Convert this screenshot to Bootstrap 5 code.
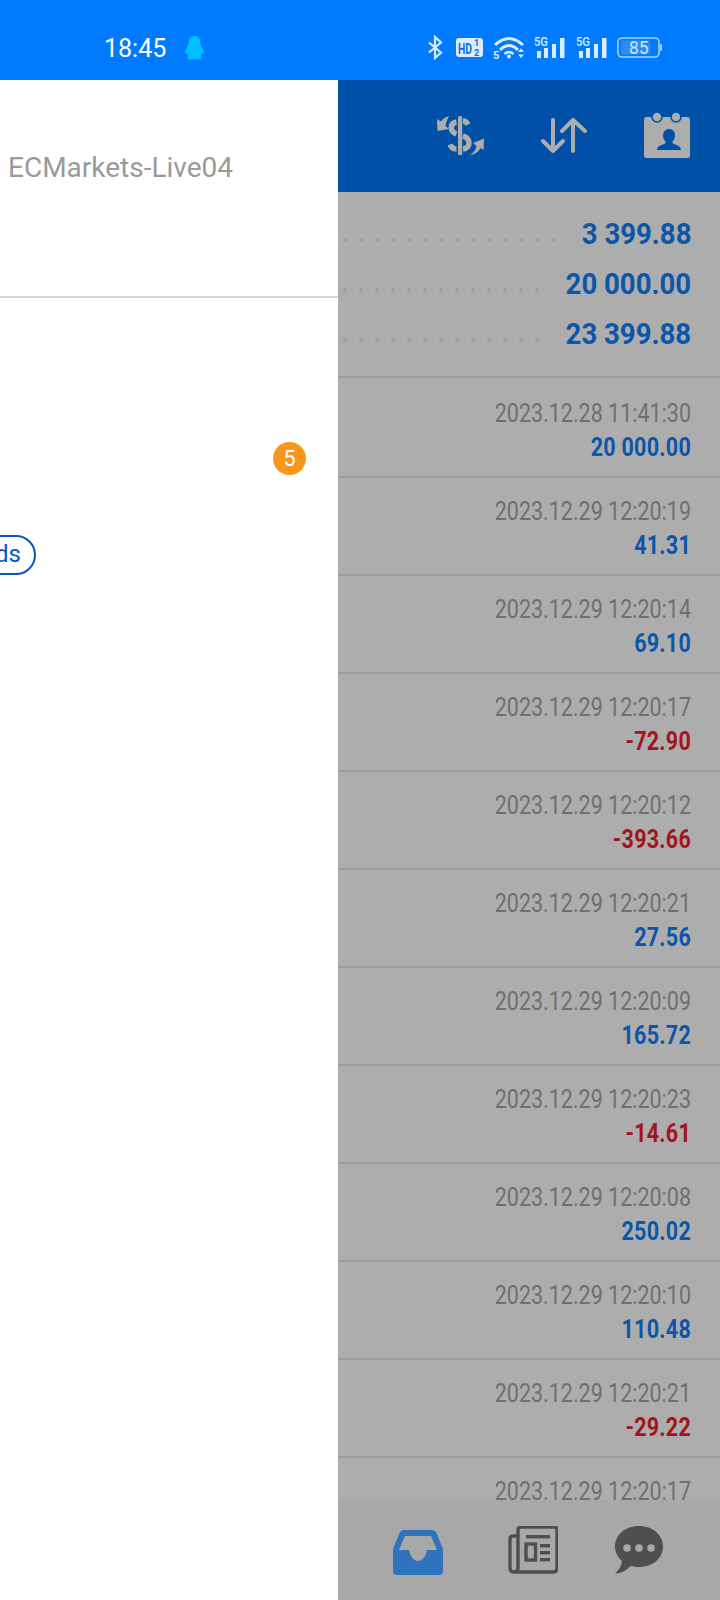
<!DOCTYPE html>
<html lang="en">
<head>
    <meta charset="UTF-8">
    <meta name="viewport" content="width=device-width, initial-scale=1.0">
    <title>Trade history</title>
    <link rel="stylesheet" href="https://cdn.jsdelivr.net/npm/bootstrap@5.3.0/dist/css/bootstrap.min.css">
    <style>
        body { width: 720px; height: 1600px; overflow: hidden; font-family: Roboto, "Liberation Sans", sans-serif; background: #fff; }
        svg { display: block; flex: none; }

        /* status bar */
        .status-strip { height: 80px; background: #007aff; padding: 36px 58px 0 104px; }
        .clock { color: #fff; font-size: 25px; line-height: 26px; width: 80px; }
        .status-icons { margin-top: -4px; }

        /* left drawer */
        .drawer { width: 338px; height: 1520px; flex: none; background: #fff; }
        .drawer-head { height: 218px; border-bottom: 2px solid #d6d6d6; padding: 73px 0 0 8px; }
        .server-name { color: #9a9a9a; font-size: 28px; line-height: 30px; white-space: nowrap; }
        .drawer-count { padding: 144px 32px 0 0; height: 0; }
        .count-dot { width: 33px; height: 33px; background: #f7981d; color: #fff; font-size: 22px; line-height: 1; }
        .funds-wrap { width: 36px; margin-top: 93px; }
        .funds-pill { flex: none; height: 40px; border: 2px solid #0a56c0; border-radius: 20px; color: #0a56c0; font-size: 24px; line-height: 34px; padding: 0 13px 0 14px; }

        /* right side, dimmed by the open drawer */
        .main-side { background: #adadad; height: 1520px; min-width: 0; }
        .top-tools { height: 112px; background: #0050a8; padding: 32px 30px 0 98px; }
        .tool-drop { margin-top: 6px; }
        .totals { height: 184px; padding: 17px 29px 0 0; }
        .total-line { height: 50px; }
        .leader { flex: 1 1 0; height: 4px; margin: 12px 26px 0 5px; background-image: radial-gradient(circle at 2px 2px, #a0a0a0 2px, transparent 2.2px); background-size: 16px 4px; background-repeat: repeat-x; }
        .total-val { color: #0b56ab; font-size: 29px; font-weight: 700; line-height: 30px; white-space: nowrap; display: block; transform: scaleX(.95); transform-origin: right center; margin-left: -7px; }

        .deal-list { flex: 1 1 0; min-height: 0; overflow: hidden; border-radius: 0; }
        .deal-list .list-group-item { flex: none; height: 98px; padding: 17px 29px 0 0; background: transparent; border: 0; border-top: 2px solid #9c9c9c; text-align: right; }
        .deal-list .list-group-item:first-child { height: 100px; padding-top: 19px; }
        .deal-date, .deal-amt { display: block; line-height: 34px; transform: scaleX(.86); transform-origin: right center; white-space: nowrap; font-size: 25px; }
        .deal-date { color: #6f6f6f; }
        .deal-amt { font-weight: 700; letter-spacing: .3px; }
        .amt-plus { color: #0b56ab; }
        .amt-minus { color: #a3141c; }

        .bottom-tabs { height: 100px; flex: none; background: #a8a8a8; padding: 26px 56px 0 55px; }
        .tab-news { margin-left: 8px; }
    </style>
</head>
<body>
    <!-- status bar -->
    <div class="status-strip d-flex align-items-start">
        <div class="clock">18:45</div>
        <svg width="21" height="24" viewBox="0 0 21 24"><path d="M10.500 0C6 0 4.500 3.500 4.500 7.500C4.500 9.500 1.500 13 1 16C.8 17.500 1.600 18 2.800 16.800C3.200 18 3.800 19 4.600 20C3 20.600 2.600 23 5 23.500H8C9 23.500 10 23 10.500 23C11 23 12 23.500 13 23.500H16C18.400 23 18 20.600 16.400 20C17.200 19 17.800 18 18.200 16.800C19.400 18 20.200 17.500 20 16C19.500 13 16.500 9.500 16.500 7.500C16.500 3.500 15 0 10.500 0Z" fill="#00c0ff"/></svg>
        <div class="status-icons ms-auto">
            <svg width="234" height="32" viewBox="0 -4 234 32">
                <!-- bluetooth -->
                <path d="M1 6.500L13 16.500L7 22V1L13 6.500L1 16.500" fill="none" stroke="#dcecff" stroke-width="2.200"/>
                <!-- HD 1/2 -->
                <rect x="28" y="2" width="27" height="19" rx="3" fill="#dcecff"/>
                <text x="30" y="17.500" font-family="Roboto, sans-serif" font-weight="700" font-size="15" fill="#0a6fe0" textLength="14" lengthAdjust="spacingAndGlyphs">HD</text>
                <text x="46" y="10" font-family="Roboto, sans-serif" font-weight="700" font-size="9" fill="#0a6fe0">1</text>
                <text x="46" y="19.500" font-family="Roboto, sans-serif" font-weight="700" font-size="9" fill="#0a6fe0">2</text>
                <!-- wifi -->
                <path d="M67 9Q81 -4 95 9M72 14Q81 5 90 14" fill="none" stroke="#dcecff" stroke-width="3"/>
                <path d="M76.500 18Q81 14 85.500 18" fill="none" stroke="#dcecff" stroke-width="2.600"/>
                <circle cx="81" cy="20.500" r="2" fill="#dcecff"/>
                <text x="65" y="23" font-family="Roboto, sans-serif" font-weight="700" font-size="11" fill="#dcecff">5</text>
                <path d="M90 16h6l-3 -3.500zM90 18.500h6l-3 3.500z" fill="#dcecff"/>
                <!-- signal 1 -->
                <text x="106" y="10" font-family="Roboto, sans-serif" font-weight="500" font-size="12.500" fill="#dcecff" textLength="14" lengthAdjust="spacingAndGlyphs">5G</text>
                <rect x="109" y="15" width="4" height="7" fill="#dcecff"/><rect x="116" y="12" width="4" height="10" fill="#dcecff"/><rect x="124" y="8" width="4" height="14" fill="#dcecff"/><rect x="132" y="2" width="4.500" height="20" fill="#dcecff"/>
                <!-- signal 2 -->
                <text x="148" y="10" font-family="Roboto, sans-serif" font-weight="500" font-size="12.500" fill="#dcecff" textLength="14" lengthAdjust="spacingAndGlyphs">5G</text>
                <rect x="151" y="15" width="4" height="7" fill="#dcecff"/><rect x="158" y="12" width="4" height="10" fill="#dcecff"/><rect x="166" y="8" width="4" height="14" fill="#dcecff"/><rect x="174" y="2" width="4.500" height="20" fill="#dcecff"/>
                <!-- battery -->
                <rect x="190" y="2" width="41" height="19" rx="4" fill="none" stroke="#a9d2ff" stroke-width="1.600"/>
                <rect x="193" y="4.500" width="29" height="14" rx="2" fill="#2b8cf5"/>
                <rect x="232" y="8" width="2" height="7" rx="1" fill="#a9d2ff"/>
                <text x="201" y="18" font-family="Roboto, sans-serif" font-size="17.500" fill="#cfe5ff">85</text>
            </svg>
        </div>
    </div>

    <div class="d-flex">
        <!-- drawer, slid most of the way out -->
        <div class="drawer overflow-hidden">
            <div class="drawer-head">
                <div class="server-name">ECMarkets-Live04</div>
            </div>
            <div class="drawer-count d-flex justify-content-end">
                <div class="count-dot rounded-circle d-flex align-items-center justify-content-center">5</div>
            </div>
            <div class="funds-wrap d-flex justify-content-end overflow-hidden">
                <div class="funds-pill">Funds</div>
            </div>
        </div>

        <div class="main-side flex-grow-1 d-flex flex-column">
            <div class="top-tools d-flex align-items-start justify-content-between">
                <!-- swap dollar -->
                <svg class="mt-1" width="48" height="40" viewBox="0 0 48 40" fill="#adadad">
                    <rect x="22" y="0" width="4.200" height="39" rx="1.500"/>
                    <g fill="none" stroke="#adadad" stroke-width="5.500">
                        <path d="M20.500 6C14 7 13 15 20.500 18"/>
                        <path d="M27 5C29.500 5 31 6.500 32 8.500"/>
                        <path d="M27 20C35 22 35 32 27 33"/>
                        <path d="M20.500 33C17 33 15 31 14 28.500"/>
                    </g>
                    <path d="M13 0C9 1 6.500 3 5 5.500L1 3L1.500 15L13 13L9.500 10C10 6 11.500 3 13 0Z"/>
                    <path d="M33.500 39C38 37 40 33 40.500 30L37 27L48 22.500L47.500 34L44.500 32C42.500 36 38 39 33.500 39Z"/>
                </svg>
                <!-- sort arrows -->
                <svg class="tool-drop" width="46" height="36" viewBox="0 0 46 36" fill="none" stroke="#adadad" stroke-width="4" stroke-linecap="round" stroke-linejoin="round">
                    <path d="M12 2V33M2 23L12 33L22 23"/>
                    <path d="M32 2V33M21 13L32 2L44 13"/>
                </svg>
                <!-- contact calendar -->
                <svg width="46" height="46" viewBox="0 0 46 46">
                    <rect x="0" y="5" width="46" height="41" rx="2.500" fill="#adadad"/>
                    <circle cx="13" cy="5" r="5" fill="#adadad" stroke="#0050a8" stroke-width="1.600"/>
                    <circle cx="32" cy="5" r="5" fill="#adadad" stroke="#0050a8" stroke-width="1.600"/>
                    <path d="M25 17C29 17 31 20 31 23.500C31 26 30 28 28.500 29.500V31C30 33 37 33 37 38H13C13 33 20 33 21.500 31V29.500C20 28 19 26 19 23.500C19 20 21 17 25 17Z" fill="#0050a8"/>
                </svg>
            </div>

            <div class="totals">
                <div class="total-line d-flex align-items-center"><span class="leader"></span><span class="total-val">3 399.88</span></div>
                <div class="total-line d-flex align-items-center"><span class="leader"></span><span class="total-val">20 000.00</span></div>
                <div class="total-line d-flex align-items-center"><span class="leader"></span><span class="total-val">23 399.88</span></div>
            </div>

            <ul id="dealList" class="deal-list list-group list-group-flush"></ul>

            <div class="bottom-tabs d-flex justify-content-between align-items-start">
                <!-- inbox -->
                <svg class="mt-1" width="50" height="45" viewBox="0 0 50 45">
                    <path d="M11 0H39C41 0 42.500 1 43.500 3L50 19V41C50 43.500 48.500 45 46 45H4C1.500 45 0 43.500 0 41V19L6.500 3C7.500 1 9 0 11 0Z" fill="#2f72bd"/>
                    <path d="M12 6H38L44 20H34C33 25 30 31 25 31C20 31 17 25 16 20H6Z" fill="#a8a8a8"/>
                </svg>
                <!-- news -->
                <svg class="tab-news" width="50" height="48" viewBox="0 0 50 48">
                    <path d="M9 10H5Q2 10 2 13V42Q2 46 6 46H46Q49 46 49 42V4Q49 1 46 1H13Q10 1 10 4V42Q10 46 6 46" fill="none" stroke="#4f4f4f" stroke-width="3.400"/>
                    <rect x="18" y="9" width="24" height="3.400" fill="#4f4f4f"/>
                    <rect x="18" y="18" width="9.500" height="16" fill="none" stroke="#4f4f4f" stroke-width="3.400"/>
                    <rect x="32" y="18" width="10" height="3.400" fill="#4f4f4f"/>
                    <rect x="32" y="25" width="10" height="3.400" fill="#4f4f4f"/>
                    <rect x="32" y="32" width="10" height="3.400" fill="#4f4f4f"/>
                </svg>
                <!-- chat -->
                <svg width="50" height="48" viewBox="0 0 50 48">
                    <path d="M25 0C39 0 49 9 49 20.500C49 32 39 41 25 41C22 41 19 40.500 16.500 40C13 44 7 47.500 1 47.500C5 44 7.500 40 8 35C3.500 31 1 26 1 20.500C1 9 11 0 25 0Z" fill="#4f4f4f"/>
                    <circle cx="13" cy="22" r="3.800" fill="#a8a8a8"/>
                    <circle cx="25" cy="22" r="3.800" fill="#a8a8a8"/>
                    <circle cx="37" cy="22" r="3.800" fill="#a8a8a8"/>
                </svg>
            </div>
        </div>
    </div>

    <script>
        const deals = [
            ["2023.12.28 11:41:30", "20 000.00"],
            ["2023.12.29 12:20:19", "41.31"],
            ["2023.12.29 12:20:14", "69.10"],
            ["2023.12.29 12:20:17", "-72.90"],
            ["2023.12.29 12:20:12", "-393.66"],
            ["2023.12.29 12:20:21", "27.56"],
            ["2023.12.29 12:20:09", "165.72"],
            ["2023.12.29 12:20:23", "-14.61"],
            ["2023.12.29 12:20:08", "250.02"],
            ["2023.12.29 12:20:10", "110.48"],
            ["2023.12.29 12:20:21", "-29.22"],
            ["2023.12.29 12:20:17", ""]
        ];

        const list = document.getElementById("dealList");
        deals.forEach(d => {
            const cls = d[1].startsWith("-") ? "amt-minus" : "amt-plus";
            list.innerHTML += `<li class="list-group-item"><span class="deal-date">${d[0]}</span><span class="deal-amt ${cls}">${d[1]}</span></li>`;
        });
    </script>
    <script src="https://cdn.jsdelivr.net/npm/bootstrap@5.3.0/dist/js/bootstrap.bundle.min.js"></script>
</body>
</html>
